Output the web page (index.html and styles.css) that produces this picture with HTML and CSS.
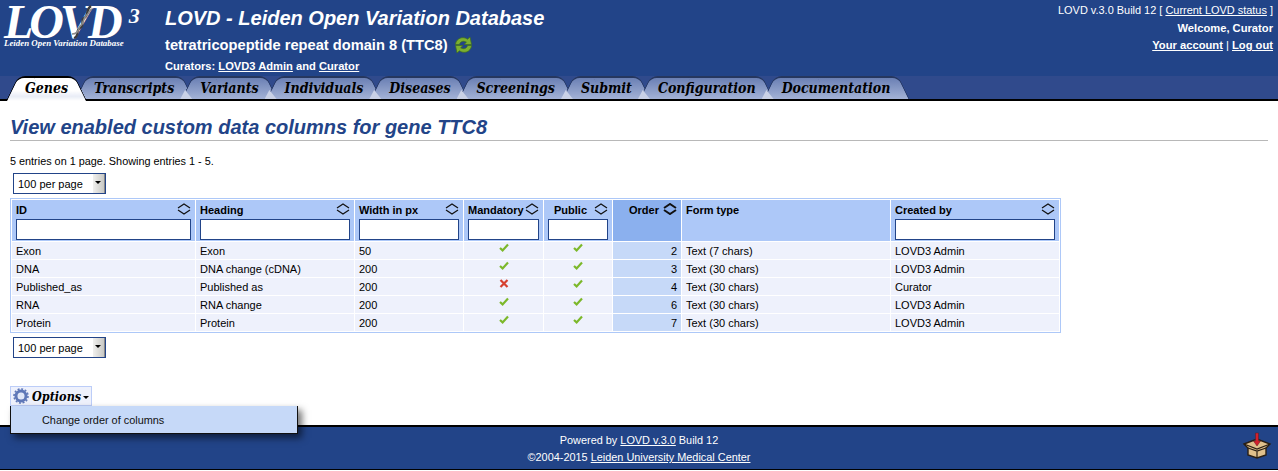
FILE: index.html
```html
<!DOCTYPE html>
<html lang="en">
<head>
<meta charset="utf-8">
<title>LOVD - View enabled custom data columns for gene TTC8</title>
<link rel="stylesheet" href="styles.css">
</head>
<body>
<svg class="defs" width="0" height="0" aria-hidden="true">
  <symbol id="sort" viewBox="0 0 14 12"><path d="M1 5 L7 1 L13 5 M1 7 L7 11 L13 7" fill="none" stroke="currentColor" stroke-width="1.2"/></symbol>
  <symbol id="sortb" viewBox="0 0 14 12"><path d="M1 5 L7 1 L13 5 M1 7 L7 11 L13 7" fill="none" stroke="currentColor" stroke-width="2"/></symbol>
  <symbol id="yes" viewBox="0 0 10 9"><path d="M1 5 L3.6 7.4 L9 1.6" fill="none" stroke="#7cb82a" stroke-width="2.2"/></symbol>
  <symbol id="no" viewBox="0 0 10 9"><path d="M1.5 1 L8.5 8 M8.5 1 L1.5 8" fill="none" stroke="#d6402f" stroke-width="2.2"/></symbol>
</svg>
<header class="top">
  <div class="logo">
    <div class="logo-mark"><span class="logo-word">LOVD</span><span class="logo-three">3</span>
      <svg class="helix" width="24" height="36" viewBox="0 0 24 36"><path d="M4 34 C10 32 5 26 10 24 C15 22 10 16 14 14 C19 12 15 6 21 2" fill="none" stroke="#3c3c3c" stroke-width="2.2"/><path d="M2 30 C8 30 8 26 10 22 C14 20 13 14 16 12 C19 10 19 6 22 5" fill="none" stroke="#8a8a8a" stroke-width="1.6"/></svg>
    </div>
    <div class="logo-sub">Leiden Open Variation Database</div>
  </div>
  <div class="titles">
    <h1 class="site-title">LOVD - Leiden Open Variation Database</h1>
    <div class="gene-title">tetratricopeptide repeat domain 8 (TTC8)
      <svg class="refresh" width="19" height="18" viewBox="0 0 19 18"><path d="M1.5 8 C2.5 2 9 0 13.5 3.2 L16 1 L17.5 8.5 L10 8.5 L12.4 6.2 C9.5 4.5 6.5 5.2 5.4 8.5 L1.5 8.5 Z" fill="#7cb030" stroke="#3f6f1c" stroke-width=".7"/><path d="M17.5 10 C16.5 16 10 18 5.5 14.8 L3 17 L1.5 9.5 L9 9.5 L6.6 11.8 C9.5 13.5 12.5 12.8 13.6 9.5 L17.5 9.5 Z" fill="#7cb030" stroke="#3f6f1c" stroke-width=".7"/></svg>
    </div>
    <div class="curators">Curators: <a href="#">LOVD3 Admin</a> and <a href="#">Curator</a></div>
  </div>
  <div class="account">
    <div class="status">LOVD v.3.0 Build 12 [ <a href="#">Current LOVD status</a> ]</div>
    <div class="acc-b">Welcome, Curator</div>
    <div class="acc-b"><a href="#">Your account</a> <span class="sep">|</span> <a href="#">Log out</a></div>
  </div>
</header>
<nav class="tabs">
  <a class="tab active" href="#"><span>Genes</span></a>
  <a class="tab" href="#"><span>Transcripts</span></a>
  <a class="tab" href="#"><span>Variants</span></a>
  <a class="tab" href="#"><span>Individuals</span></a>
  <a class="tab" href="#"><span>Diseases</span></a>
  <a class="tab" href="#"><span>Screenings</span></a>
  <a class="tab" href="#"><span>Submit</span></a>
  <a class="tab" href="#"><span>Configuration</span></a>
  <a class="tab" href="#"><span>Documentation</span></a>
</nav>
<main class="content">
  <h2 class="page-title">View enabled custom data columns for gene TTC8</h2>
  <p class="entries">5 entries on 1 page. Showing entries 1 - 5.</p>
  <div class="pager"><select class="per-page"><option>100 per page</option></select><span class="sel-btn"></span></div>
  <table class="data">
    <colgroup><col class="c1"><col class="c2"><col class="c3"><col class="c4"><col class="c5"><col class="c6"><col class="c7"><col class="c8"></colgroup>
    <thead>
      <tr>
        <th><div class="th-head"><span>ID</span><svg class="sort"><use href="#sort"/></svg></div><input class="filter" type="text"></th>
        <th><div class="th-head"><span>Heading</span><svg class="sort"><use href="#sort"/></svg></div><input class="filter" type="text"></th>
        <th><div class="th-head"><span>Width in px</span><svg class="sort"><use href="#sort"/></svg></div><input class="filter" type="text"></th>
        <th><div class="th-head"><span>Mandatory</span><svg class="sort"><use href="#sort"/></svg></div><input class="filter" type="text"></th>
        <th><div class="th-head"><span class="center-head">Public</span><svg class="sort"><use href="#sort"/></svg></div><input class="filter" type="text"></th>
        <th class="ord"><div class="th-head end"><span>Order</span><svg class="sort"><use href="#sortb"/></svg></div></th>
        <th><div class="th-head"><span>Form type</span></div></th>
        <th><div class="th-head"><span>Created by</span><svg class="sort"><use href="#sort"/></svg></div><input class="filter" type="text"></th>
      </tr>
    </thead>
    <tbody>
      <tr><td>Exon</td><td>Exon</td><td>50</td><td class="mid"><svg class="mark"><use href="#yes"/></svg></td><td class="mid"><svg class="mark"><use href="#yes"/></svg></td><td class="ord">2</td><td>Text (7 chars)</td><td>LOVD3 Admin</td></tr>
      <tr><td>DNA</td><td>DNA change (cDNA)</td><td>200</td><td class="mid"><svg class="mark"><use href="#yes"/></svg></td><td class="mid"><svg class="mark"><use href="#yes"/></svg></td><td class="ord">3</td><td>Text (30 chars)</td><td>LOVD3 Admin</td></tr>
      <tr><td>Published_as</td><td>Published as</td><td>200</td><td class="mid"><svg class="mark"><use href="#no"/></svg></td><td class="mid"><svg class="mark"><use href="#yes"/></svg></td><td class="ord">4</td><td>Text (30 chars)</td><td>Curator</td></tr>
      <tr><td>RNA</td><td>RNA change</td><td>200</td><td class="mid"><svg class="mark"><use href="#yes"/></svg></td><td class="mid"><svg class="mark"><use href="#yes"/></svg></td><td class="ord">6</td><td>Text (30 chars)</td><td>LOVD3 Admin</td></tr>
      <tr><td>Protein</td><td>Protein</td><td>200</td><td class="mid"><svg class="mark"><use href="#yes"/></svg></td><td class="mid"><svg class="mark"><use href="#yes"/></svg></td><td class="ord">7</td><td>Text (30 chars)</td><td>LOVD3 Admin</td></tr>
    </tbody>
  </table>
  <div class="pager low"><select class="per-page"><option>100 per page</option></select><span class="sel-btn"></span></div>
  <div class="options-wrap">
    <button class="options" type="button">
      <svg class="gear" width="16" height="16" viewBox="0 0 16 16"><circle cx="8" cy="8" r="5" fill="none" stroke="#5f78b8" stroke-width="3"/><circle cx="8" cy="8" r="7" fill="none" stroke="#5f78b8" stroke-width="1.6" stroke-dasharray="2 1.66"/><circle cx="8" cy="8" r="3" fill="#dfe6f8"/></svg>
      <span>Options</span><i class="caret"></i>
    </button>
    <div class="menu"><a href="#">Change order of columns</a></div>
  </div>
</main>
<footer class="foot">
  <div>Powered by <a href="#">LOVD v.3.0</a> Build 12</div>
  <div>©2004-2015 <a href="#">Leiden University Medical Center</a></div>
  <svg class="box" width="30" height="27" viewBox="0 0 30 27"><path d="M2 12 L15 7 L28 12 L24 16 L24 23 L15 26 L6 23 L6 16 Z" fill="#e0c08c" stroke="#2a1f14" stroke-width="1.4"/><path d="M6 16 L15 19 L24 16 M15 19 L15 26 M2 12 L15 17 L28 12" fill="none" stroke="#2a1f14" stroke-width="1.2"/><path d="M15 14 L11.5 9 L13.5 9 L13.5 1 L16.5 1 L16.5 9 L18.5 9 Z" fill="#d4202c" stroke="#5a1a20" stroke-width=".5"/></svg>
</footer>
</body>
</html>
```
FILE: styles.css
```css
* { box-sizing: border-box; }
html, body { margin: 0; padding: 0; }
body { font-family: "Liberation Sans", Arial, sans-serif; font-size: 11px; color: #000; background: #fff; height: 471px; overflow: hidden; }
.defs { display: block; height: 0; }

.top { display: flex; height: 76px; background: #224488; color: #fff; }
.top a { color: #fff; }
.logo { width: 165px; flex: none; padding: 0 0 0 4px; }
.logo-mark { position: relative; height: 39px; display: flex; align-items: flex-start; font-family: "Liberation Serif", serif; font-style: italic; font-weight: bold; }
.logo-word { font-size: 48px; line-height: 35px; letter-spacing: -4px; margin-top: 4px; }
.logo-three { font-size: 22px; line-height: 20px; margin: 6px 0 0 10px; }
.helix { position: absolute; left: 66px; top: 4px; }
.logo-sub { font-family: "Liberation Serif", serif; font-style: italic; font-weight: bold; font-size: 8.9px; line-height: 8px; white-space: nowrap; }
.titles { flex: 1; }
.site-title { margin: 6px 0 0; font-size: 20px; line-height: 24px; font-style: italic; font-weight: bold; }
.gene-title { display: flex; align-items: center; gap: 6px; margin-top: 5px; font-size: 14.67px; line-height: 20px; font-weight: bold; height: 20px; }
.refresh { flex: none; }
.curators { margin-top: 5px; font-size: 11.17px; line-height: 13px; font-weight: bold; }
.account { width: 240px; flex: none; padding: 2px 5px 0 0; text-align: right; line-height: 17.5px; }
.status { font-size: 10.95px; }
.acc-b { font-weight: bold; font-size: 11.2px; }
.sep { font-weight: normal; }

.tabs { display: flex; height: 25px; padding-left: 12px; background: #304a8c; border-bottom: 2px solid #000; }
.tab { position: relative; display: block; height: 23px; padding: 0 13px; color: #000; text-decoration: none; font-family: "DejaVu Serif Condensed", "DejaVu Serif", serif; font-style: italic; font-weight: bold; font-size: 14px; line-height: 24px; white-space: nowrap; }
.tab span { position: relative; z-index: 2; display: block; height: 23px; }
.tab + .tab span::before { content: ""; position: absolute; left: -20px; bottom: 0; width: 12px; height: 9px; background: #c9d1e6; clip-path: polygon(40% 0, 100% 100%, 0 100%); }
.tab.active + .tab span::before { display: none; }
.tab::before, .tab::after { content: ""; position: absolute; top: 0; bottom: 0; width: 60%; background: linear-gradient(#6b80b4, #a3b2d6); border-top: 2px solid #26375f; z-index: 1; }
.tab::before { left: 0; transform: skewX(-26deg); border-left: 1px solid #26375f; border-radius: 7px 0 0 0; }
.tab::after { right: 0; transform: skewX(26deg); border-right: 1px solid #26375f; border-radius: 0 7px 0 0; }
.tab.active { z-index: 3; height: 25px; line-height: 24px; }
.tab.active::before, .tab.active::after { background: linear-gradient(#fff 55%, #e8ecf6 80%, #fff); border-color: #000; }

.content { position: relative; height: 324px; padding: 0 10px; }
.page-title { margin: 0; height: 40px; padding-top: 14px; font-size: 20px; line-height: 24px; font-style: italic; font-weight: bold; color: #224488; border-bottom: 1px solid #b8b8b8; }
.entries { margin: 14px 0 0; line-height: 13px; font-size: 10.85px; }
.pager { position: relative; display: block; width: 93px; height: 21px; margin: 5px 0 0 3px; }
.pager.low { margin-top: 4px; }
.per-page { display: block; width: 93px; height: 21px; padding: 0 0 0 4px; border: 1px solid #224488; border-radius: 0; background: #fff; font: 11px "Liberation Sans", Arial, sans-serif; color: #000; appearance: none; -webkit-appearance: none; }
.sel-btn { position: absolute; right: 1px; top: 1px; bottom: 1px; width: 12px; background: linear-gradient(90deg, #f0f0ee, #c8c8c4); border-right: 1px solid #888; pointer-events: none; }
.sel-btn::after { content: ""; position: absolute; left: 2px; top: 7px; border: 3px solid transparent; border-top-color: #000; border-bottom: 0; }

.data { margin: 4px 0 0 0; table-layout: fixed; width: 1051px; border: 1px solid #adc8f8; border-collapse: separate; border-spacing: 1px; background: #fff; }
.c1 { width: 183px; } .c2 { width: 158px; } .c3 { width: 108px; } .c4 { width: 79px; }
.c5 { width: 68px; } .c6 { width: 68px; } .c7 { width: 208px; } .c8 { width: 168px; }
.data th { height: 41px; padding: 0 4px; background: #adc8f8; text-align: left; vertical-align: top; font-size: 11px; }
.data th.ord { background: #8bb0ee; }
.th-head { display: flex; justify-content: space-between; align-items: center; height: 19px; }
.th-head.end { justify-content: flex-end; gap: 4px; }
.center-head { margin-left: 6px; }
.sort { width: 14px; height: 12px; flex: none; color: #111; margin-top: -1px; }
.filter { display: block; width: 100%; height: 21px; padding: 0 2px; border: 1px solid #224488; background: #fff; border-radius: 0; }
.data td { height: 17px; padding: 1px 4px 0; background: #eef1fc; font-size: 11px; line-height: 13px; white-space: nowrap; overflow: hidden; }
.data td.ord { background: #c6d9f8; text-align: right; }
.data td.mid { text-align: center; padding: 0; }
.mark { display: block; width: 10px; height: 9px; margin: 0 auto 6px; }

.options-wrap { position: relative; margin-top: 28px; width: 82px; height: 20px; }
.options { display: flex; align-items: center; gap: 3px; width: 82px; height: 20px; padding: 0 2px; background: #eef1fc; border: 1px solid #bccdf8; font-family: "DejaVu Serif Condensed", "DejaVu Serif", serif; font-style: italic; font-weight: bold; font-size: 12.5px; color: #000; }
.gear { flex: none; }
.caret { display: block; flex: none; border: 3px solid transparent; border-top-color: #000; border-bottom: 0; margin: 2px 0 0 -1px; }
.menu { position: absolute; left: 0; top: 20px; width: 288px; height: 28px; padding: 0 0 0 31px; background: #c6d9f8; border: 1px solid #111; border-top: 0; box-shadow: 4px 4px 7px rgba(0,0,0,.55); z-index: 5; line-height: 28px; }
.menu a { color: #111; text-decoration: none; font-size: 10.9px; }

.foot { position: relative; height: 45px; padding-top: 5px; background: #224488; border-top: 2px solid #000; border-bottom: 1px solid #000; color: #fff; text-align: center; line-height: 17px; font-size: 10.9px; }
.foot a { color: #fff; }
.box { position: absolute; right: 6px; top: 5px; }
```
